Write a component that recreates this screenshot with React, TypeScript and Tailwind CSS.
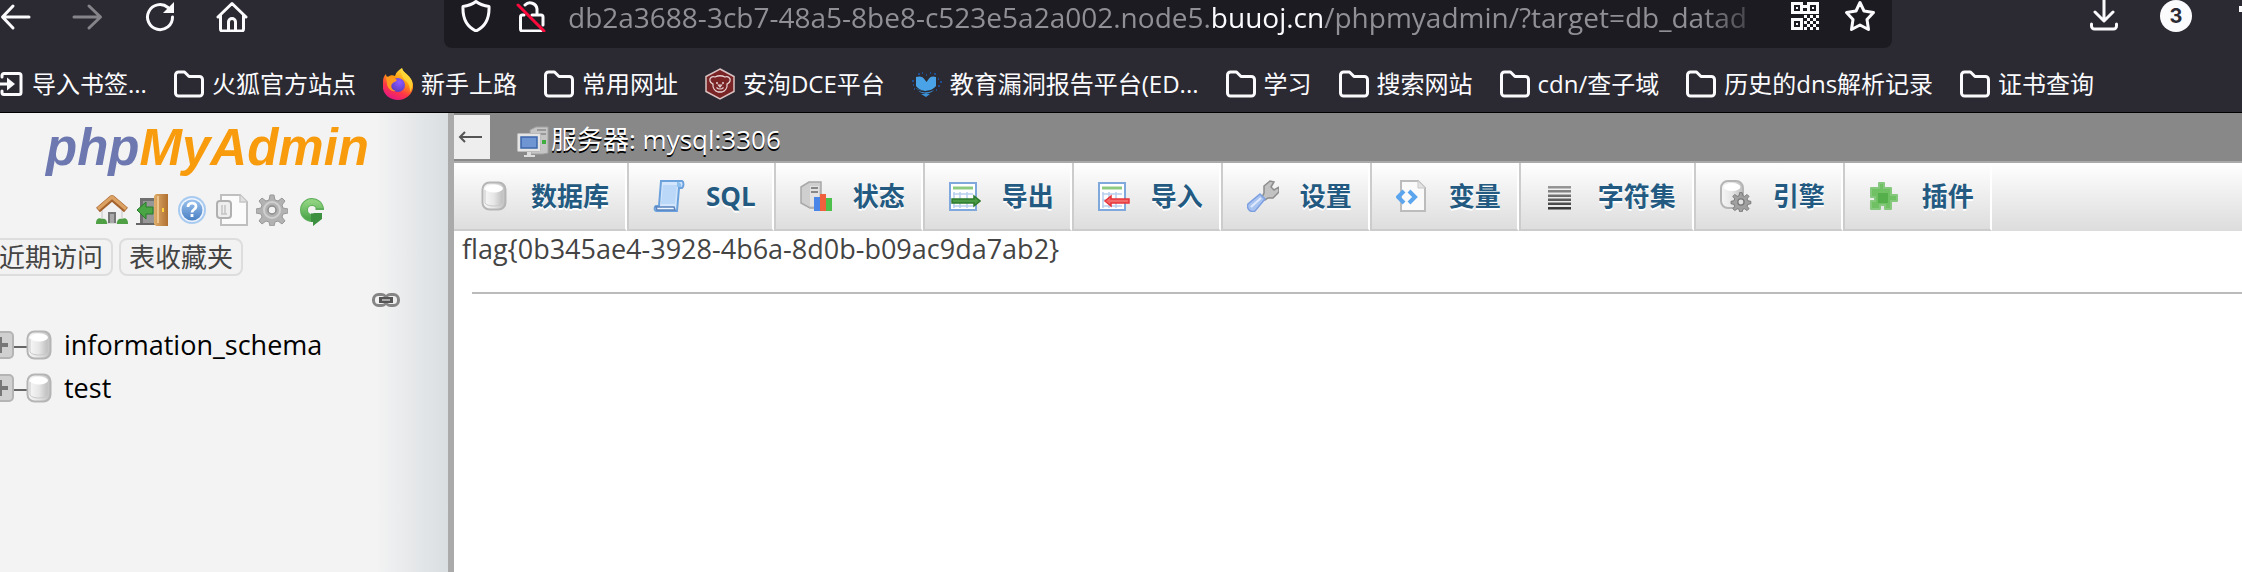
import type { ReactNode } from 'react';

type IconProps = { className?: string };

const Svg = ({ className = 'size-8', box = '0 0 32 32', children }: { className?: string; box?: string; children: ReactNode }) => (
  <svg className={`${className} shrink-0`} viewBox={box} fill="none" aria-hidden="true">
    {children}
  </svg>
);

/* ---------- browser icons ---------- */
const line = { stroke: '#fbfbfe', strokeWidth: 3, strokeLinecap: 'round', strokeLinejoin: 'round' } as const;

const BackIcon = () => (
  <Svg>
    <path d="M13 6 2.500 17 13 28M3 17h26" {...line} />
  </Svg>
);
const ForwardIcon = () => (
  <Svg>
    <path d="M17 6 28.500 17 17 28M28 17H2" {...line} stroke="#85848a" />
  </Svg>
);
const ReloadIcon = () => (
  <Svg>
    <path d="M28.500 17A12.500 12.500 0 1 1 24 7.500" {...line} />
    <path d="M30 2v11H19z" fill="#fbfbfe" />
  </Svg>
);
const HomeIcon = () => (
  <Svg>
    <path d="M2 17 16 3.500 30 17M4.500 15v14a2 2 0 0 0 2 2h19a2 2 0 0 0 2-2V15M12.500 31v-9a3.500 3.500 0 0 1 7 0v9" {...line} />
  </Svg>
);
const ShieldIcon = () => (
  <Svg>
    <path d="M16 1.500C12 4.500 7 6 3 6.500c-.5 11 3.500 20 13 24.500 9.500-4.500 13.500-13.500 13-24.500-4-.5-9-2-13-5z" {...line} />
  </Svg>
);
const LockIcon = () => (
  <Svg>
    <path d="M9 5a7 7 0 0 1 12 4v6M8 15h-1.500a2 2 0 0 0-2 2v12a2 2 0 0 0 2 2H25M16 15h9a2 2 0 0 1 2 2v8" {...line} />
    <path d="M2 5 28 31" stroke="#ff0a3c" strokeWidth="3" strokeLinecap="round" />
  </Svg>
);
const QrIcon = () => (
  <Svg className="size-[30px]" box="0 0 30 30">
    <path
      fillRule="evenodd"
      fill="#fbfbfe"
      d="M1 2h12v12H1zM4 5v6h6V5zM17 2h12v12H17zM20 5v6h6V5zM1 18h12v12H1zM4 21v6h6v-6zM13 5h4v3h-4zM13 11h4v3h-4zM6 7h2v2H6zM22 7h2v2h-2zM6 23h2v2H6zM14 15h3v3h-3zM17 18h3v3h-3zM20 15h3v3h-3zM26 15h3v3h-3zM23 18h3v3h-3zM14 21h3v3h-3zM20 21h3v3h-3zM26 21h3v3h-3zM17 24h3v3h-3zM23 24h3v3h-3zM14 27h3v3h-3zM20 27h3v3h-3zM26 27h3v3h-3z"
    />
  </Svg>
);
const StarIcon = () => (
  <Svg>
    <path d="m16 2.500 4 8.500 9.500 1.500-6.500 7 1.500 10L16 25l-8.500 4.500 1.500-10-6.500-7L12 11z" {...line} />
  </Svg>
);
const DownloadIcon = () => (
  <Svg>
    <path d="M16 0v20M7 12l9 9 9-9M3.500 24v2a3 3 0 0 0 3 3h19a3 3 0 0 0 3-3v-2" {...line} />
  </Svg>
);
const FolderIcon = () => (
  <Svg className="h-8 w-[30px]" box="0 0 30 32">
    <path d="M1.500 7a3 3 0 0 1 3-3h6l4.500 4.500h10.500a3 3 0 0 1 3 3V25a3 3 0 0 1-3 3h-21a3 3 0 0 1-3-3z" {...line} />
  </Svg>
);
const ImportIcon = () => (
  <Svg className="h-8 w-6" box="0 0 24 32">
    <path d="M2 9V7.500a2 2 0 0 1 2-2h15a2 2 0 0 1 2 2v17a2 2 0 0 1-2 2H4a2 2 0 0 1-2-2V23M0 16h10" {...line} />
    <path d="m7 9.500 8 6.500-8 6.500z" fill="#fbfbfe" />
  </Svg>
);
const FirefoxIcon = () => (
  <Svg className="h-8 w-[30px]" box="1 0 30 32">
    <defs>
      <linearGradient id="ffBody" x1="0.800" y1="0" x2="0.300" y2="1">
        <stop offset="0" stopColor="#fff44f" />
        <stop offset="0.400" stopColor="#ff980e" />
        <stop offset="0.700" stopColor="#ff3647" />
        <stop offset="1" stopColor="#e31587" />
      </linearGradient>
      <radialGradient id="ffGlobe" cx="0.600" cy="0.300" r="0.700">
        <stop offset="0" stopColor="#9059ff" />
        <stop offset="1" stopColor="#5b3fc4" />
      </radialGradient>
    </defs>
    <path d="M20 0c1 5 7 6 10 13 4 9-3 19-14 19S-1 23 1 14c0-4 1-6 3-8 0 2 1 3 2 3 2-2 5-2 7-1 1-4 4-6 7-8z" fill="url(#ffBody)" />
    <circle cx="16" cy="17" r="7" fill="url(#ffGlobe)" />
    <path d="M4 9c3-1 8 0 11 3-1 2-4 2-5 4-2 3 0 6 4 7-5 1-9-3-9-8z" fill="#ff9a1f" />
    <path d="M20 0c1 5 7 6 10 13 1 4 0 8-2 11 0-5-1-8-4-11-3-2-6-7-4-13z" fill="#ffd83a" opacity="0.800" />
  </Svg>
);
const DceIcon = () => (
  <Svg className="h-8 w-[30px]" box="1 0 30 32">
    <path d="m16 1 14 7.500v15L16 31 2 23.500v-15z" fill="#7b2426" stroke="#d9c3c3" strokeWidth="1.500" />
    <path d="M11 9c3-1.500 7-1.500 10 0 3-1 6 1 5 4-.5 2-2 2.500-3 3 .5 4-2 7-5 8h-4c-3-1-5.500-4-5-8-1-.5-2.500-1-3-3-1-3 2-5 5-4z" stroke="#e6d3d3" strokeWidth="1.300" />
    <path d="M12 15h2M18 15h2" stroke="#e6d3d3" strokeWidth="1.500" />
    <path d="M14.500 17h3L16 19zM12.500 19.500c2 2 5 2 7 0" stroke="#e6d3d3" strokeWidth="1.200" />
  </Svg>
);
const BirdIcon = () => (
  <Svg className="h-8 w-[30px]" box="1 0 30 32">
    <path d="M5 9c3-1 7-1 9 3l1.500 2L17 12c2-4 5-4 8-3v9c-2 3-6 5-9.500 5S7 21 5 18z" fill="#4aa3e6" />
    <path d="M5 20c6 4 13 4 19 0-1 3-4 5-9 6-4-1-8-2-10-6z" fill="#3c92d8" />
    <path d="M3 20c7 5 16 5 23-1" stroke="#2b2a33" strokeWidth="1.500" />
    <path d="M10 26h9l-4 3z" fill="#3c92d8" />
    <path d="M7 6h2M11 5h1M15 7h1M19 5h1M23 6h2M1 13h2M2 17h1M3 21h1M27 11h1M27 18h2M25 22h1M29 14h2" stroke="#1d4f92" strokeWidth="2" />
  </Svg>
);

/* ---------- phpMyAdmin icons ---------- */
const Gradients = () => (
  <svg className="absolute size-0" aria-hidden="true">
    <defs>
      <linearGradient id="silver" x1="0" x2="1">
        <stop offset="0" stopColor="#f6f6f6" />
        <stop offset="0.500" stopColor="#e6e6e6" />
        <stop offset="1" stopColor="#bdbdbd" />
      </linearGradient>
      <linearGradient id="green" x1="0" y1="0" x2="0" y2="1">
        <stop offset="0" stopColor="#8ed27f" />
        <stop offset="1" stopColor="#4fa84c" />
      </linearGradient>
      <linearGradient id="blue" x1="0" y1="0" x2="0" y2="1">
        <stop offset="0" stopColor="#9cc3ee" />
        <stop offset="1" stopColor="#4a80c4" />
      </linearGradient>
      <linearGradient id="wood" x1="0" x2="1">
        <stop offset="0" stopColor="#e0ae6c" />
        <stop offset="1" stopColor="#b07030" />
      </linearGradient>
      <linearGradient id="bars" x1="0" y1="0" x2="0" y2="1">
        <stop offset="0" stopColor="#999" />
        <stop offset="1" stopColor="#333" />
      </linearGradient>
    </defs>
  </svg>
);

const gear =
  'M14 1h4l1 5 3 1 4-3 3 3-3 4 1 3 5 1v4l-5 1-1 3 3 4-3 3-4-3-3 1-1 4h-4l-1-4-3-1-4 3-3-3 3-4-1-3-5-1v-4l5-1 1-3-3-4 3-3 4 3 3-1z';

const HouseIcon = () => (
  <Svg>
    <path d="M6 15 16 7l10 8v14H6z" fill="#f1f1f1" stroke="#c4c4c4" />
    <path d="M12 18h8v11h-8z" fill="#777" />
    <path d="M14 20h4v9h-4z" fill="#a8a8a8" />
    <path d="m2 16 14-12 14 12" stroke="#a4622c" strokeWidth="6" strokeLinejoin="round" />
    <path d="m2 15 14-12 14 12" stroke="#dba263" strokeWidth="3.500" strokeLinejoin="round" />
    <path d="M0 29c0-4 3-6 6-4 3-1 5 1 5 4v1H0zM21 29c0-3 2-5 5-4 3-2 6 0 6 4v1H21z" fill="#4f9f44" />
  </Svg>
);
const ExitIcon = () => (
  <Svg>
    <path d="M4 4h16v25H4z" fill="#707070" />
    <path d="M7 7h11v22H7z" fill="#979797" />
    <path d="M0 30h22" stroke="#666" strokeWidth="2" />
    <path d="m18 2 2-2h12v32H20l-2-2z" fill="url(#wood)" />
    <path d="M21 2h2v27h-2z" fill="#edc48b" />
    <path d="M26 14h2v4h-2z" fill="#ffd23c" />
    <path d="m1 16 9-8v5h7v7h-7v5z" fill="#4aa545" stroke="#277c2a" />
  </Svg>
);
const HelpIcon = () => (
  <Svg>
    <circle cx="16" cy="16" r="14" fill="#a9caf0" />
    <circle cx="16" cy="16" r="12" fill="#eef5fc" />
    <circle cx="16" cy="16" r="10.500" fill="url(#blue)" />
    <path d="M12 13c0-5 8-5 8-.5 0 3-4 3-4 6M16 20v3" stroke="#fff" strokeWidth="2.800" />
  </Svg>
);
const DocsIcon = () => (
  <Svg>
    <path d="M5 1h19l7 7v23H5z" fill="#fbfbfb" stroke="#bfbfbf" strokeWidth="2" />
    <path d="M24 1v7h7" fill="#e0e0e0" stroke="#c6c6c6" strokeWidth="1.500" />
    <rect x="1" y="7" width="14" height="17" rx="3" fill="#eee" stroke="#b0b0b0" strokeWidth="2" />
    <path d="M6 11v9M9 11v9M5 20h6" stroke="#c4c4c4" strokeWidth="1.500" />
  </Svg>
);
const GearIcon = () => (
  <Svg>
    <path d={gear} fill="#b2b2b2" stroke="#999" />
    <circle cx="16" cy="16" r="8" stroke="#d0d0d0" strokeWidth="2" />
    <circle cx="16" cy="16" r="4" fill="#f3f3f3" stroke="#8c8c8c" strokeWidth="1.500" />
  </Svg>
);
const RefreshIcon = () => (
  <Svg>
    <path d="M24 15.500A8 8 0 1 0 16 24" stroke="#5fae5c" strokeWidth="8" />
    <path d="M24 15.500A8 8 0 1 0 16 24" stroke="url(#green)" strokeWidth="6" />
    <path d="m17 16 3-2h8v2z" fill="#5fae5c" />
    <path d="M15 19h11v6l-9 7v-4h-2z" fill="#3c9040" />
    <circle cx="16" cy="16" r="3.500" fill="#f3f3f3" />
  </Svg>
);
const ChainIcon = () => (
  <Svg className="h-4 w-7" box="0 0 28 16">
    <rect x="1.500" y="2.500" width="13" height="11" rx="5" stroke="#858585" strokeWidth="3" />
    <rect x="13.500" y="2.500" width="13" height="11" rx="5" stroke="#858585" strokeWidth="3" />
    <path d="M7 8h14" stroke="#555" strokeWidth="6" />
    <path d="M10 8h8" stroke="#aaa" strokeWidth="2" />
  </Svg>
);
const DatabaseIcon = ({ className = 'size-8' }: IconProps) => (
  <Svg className={className}>
    <rect x="4.500" y="2.500" width="23" height="27" rx="7" fill="url(#silver)" stroke="#b5b5b5" strokeWidth="2" />
    <path d="M7 10v13c2 4 16 4 18 0V10" fill="url(#silver)" stroke="#c9c9c9" />
    <ellipse cx="16" cy="8.500" rx="9" ry="4" fill="#fff" />
  </Svg>
);
const ServerIcon = () => (
  <Svg className="mt-1 size-8">
    <path d="m13 4 6-3h12v26l-5 1H14z" fill="#c5c5c5" stroke="#a2a2a2" />
    <path d="M20 4h9M20 8h9" stroke="#8b8b8b" strokeWidth="1.500" />
    <path d="M25 14h4v4h-4z" fill="#3fae3f" />
    <rect x="0.500" y="7.500" width="23" height="18" rx="1" fill="#e4e4e4" stroke="#bbb" />
    <rect x="4" y="11" width="16" height="11" fill="#6f96d2" stroke="#3b66aa" strokeWidth="1.500" />
    <path d="M10 26h4v3h4v2H7v-2h3z" fill="#dcdcdc" />
  </Svg>
);
const SqlIcon = () => (
  <Svg>
    <path d="M8 1h21c2 1 2 5 0 7h-3l-2 23H4C1 31 1 27 3 26h3z" fill="#d3e6fb" stroke="#6ba1dc" strokeWidth="2" />
    <path d="M10 5h14l-2 19H8z" fill="#bcd8f8" />
    <path d="M3 27h18l1 3H4z" fill="#f2f8ff" stroke="#5b82bf" strokeWidth="1.500" />
    <path d="M24 2c3 0 5 2 4 5h-4z" fill="#8fc0ee" />
  </Svg>
);
const StatusIcon = () => (
  <Svg>
    <path d="m1 7 8-5h12v26h-11l-9-5z" fill="#cfcfcf" stroke="#a8a8a8" strokeWidth="1.500" />
    <path d="M10 6h9v20h-9z" fill="#e2e2e2" />
    <path d="M11 8h7M11 12h7" stroke="#888" strokeWidth="2" />
    <path d="M14 17h6v14h-6z" fill="#4a86e8" />
    <path d="M20 14h6v17h-6z" fill="#f0603c" />
    <path d="M26 18h6v13h-6z" fill="#4cc04a" />
  </Svg>
);
const SheetBase = () => (
  <>
    <rect x="1" y="3" width="26" height="27" fill="#fff" stroke="#7fa8dc" strokeWidth="2" />
    <path d="M4 8h20" stroke="#8ecb80" strokeWidth="3" />
    <path d="M4 14h20M4 20h20M4 26h20M5 12v16M11 12v16M18 12v16" stroke="#b8d0ee" strokeWidth="1.500" />
  </>
);
const ExportIcon = () => (
  <Svg>
    <SheetBase />
    <path d="M3 19h22v-3l6 5-6 5v-3H3z" fill="#4b9a45" stroke="#2d7a2c" strokeWidth="1.500" />
  </Svg>
);
const ImportDataIcon = () => (
  <Svg>
    <SheetBase />
    <path d="M31 19H13v-3l-6 5 6 5v-3h18z" fill="#f26a6a" stroke="#e8343b" strokeWidth="1.500" />
  </Svg>
);
const WrenchIcon = () => (
  <Svg>
    <path d="M17 13V6l6-5 4 1-3 5 3 3 5-3v5l-6 6h-5l-3 2-3-3z" fill="#c2c2c2" stroke="#8c8c8c" strokeWidth="1.500" />
    <path d="m13 14 5 5-10 12c-4 2-9-2-7-7z" fill="#a9c3f1" stroke="#7c9fe0" strokeWidth="1.500" />
    <path d="M4 27 14 18" stroke="#dfe9fb" strokeWidth="2" />
  </Svg>
);
const VariablesIcon = () => (
  <Svg>
    <path d="M5 1h17l7 7v23H5z" fill="#fafafa" stroke="#bcbcbc" strokeWidth="2" />
    <path d="M22 1v7h7" fill="#e4e4e4" stroke="#c9c9c9" />
    <path d="m8 11-6 6 6 6M13 11l6 6-6 6" stroke="#5ba5ee" strokeWidth="4" />
  </Svg>
);
const CharsetIcon = () => (
  <Svg>
    <path d="M3 6h23v2.500H3zM3 10h23v2.500H3zM3 14.500h23V17H3zM3 18.500h23V21H3zM3 22.500h23V25H3zM3 27h23v2.500H3z" fill="url(#bars)" />
  </Svg>
);
const EngineIcon = () => (
  <Svg>
    <rect x="1" y="1" width="22" height="27" rx="7" fill="url(#silver)" stroke="#b5b5b5" strokeWidth="2" />
    <ellipse cx="12" cy="7" rx="8.500" ry="4" fill="#fff" />
    <g transform="translate(11 12) scale(0.620)">
      <path d={gear} fill="#a0a0a0" stroke="#777" strokeWidth="1.500" />
      <circle cx="16" cy="16" r="5" fill="#e2e2e2" stroke="#777" strokeWidth="2" />
    </g>
  </Svg>
);
const PluginIcon = () => (
  <Svg>
    <path d="M2 8h8V3h5v5h7v7h6v6h-6v8h-6v-4h-5v4H2v-8h4v-4H2z" fill="#6fc163" stroke="#86c97e" strokeWidth="2" strokeLinejoin="round" />
    <path d="M9 13h10v10H9z" fill="#55b04b" />
  </Svg>
);

/* ---------- data ---------- */
const bookmarks: { label: string; icon: ReactNode }[] = [
  { label: '导入书签...', icon: <ImportIcon /> },
  { label: '火狐官方站点', icon: <FolderIcon /> },
  { label: '新手上路', icon: <FirefoxIcon /> },
  { label: '常用网址', icon: <FolderIcon /> },
  { label: '安洵DCE平台', icon: <DceIcon /> },
  { label: '教育漏洞报告平台(ED...', icon: <BirdIcon /> },
  { label: '学习', icon: <FolderIcon /> },
  { label: '搜索网站', icon: <FolderIcon /> },
  { label: 'cdn/查子域', icon: <FolderIcon /> },
  { label: '历史的dns解析记录', icon: <FolderIcon /> },
  { label: '证书查询', icon: <FolderIcon /> },
];

const tabs: { label: string; icon: ReactNode }[] = [
  { label: '数据库', icon: <DatabaseIcon /> },
  { label: 'SQL', icon: <SqlIcon /> },
  { label: '状态', icon: <StatusIcon /> },
  { label: '导出', icon: <ExportIcon /> },
  { label: '导入', icon: <ImportDataIcon /> },
  { label: '设置', icon: <WrenchIcon /> },
  { label: '变量', icon: <VariablesIcon /> },
  { label: '字符集', icon: <CharsetIcon /> },
  { label: '引擎', icon: <EngineIcon /> },
  { label: '插件', icon: <PluginIcon /> },
];

const shortcuts: { label: string; icon: ReactNode }[] = [
  { label: '主页', icon: <HouseIcon /> },
  { label: '退出', icon: <ExitIcon /> },
  { label: '帮助', icon: <HelpIcon /> },
  { label: '文档', icon: <DocsIcon /> },
  { label: '面板设置', icon: <GearIcon /> },
  { label: '刷新', icon: <RefreshIcon /> },
];

const databases = ['information_schema', 'test'];

/* ---------- layout ---------- */
function BrowserChrome() {
  return (
    <header className="border-b border-black bg-[#2b2a33] text-[#fbfbfe]">
      <div className="flex h-12 items-start">
        <nav className="flex w-[444px] shrink-0 gap-10">
          <button aria-label="后退"><BackIcon /></button>
          <button aria-label="前进"><ForwardIcon /></button>
          <button aria-label="重新载入"><ReloadIcon /></button>
          <button aria-label="主页"><HomeIcon /></button>
        </nav>
        <div className="flex h-12 min-w-0 grow items-start rounded-b-lg bg-[#1c1b22] pr-4 pl-4">
          <ShieldIcon />
          <span className="ml-6"><LockIcon /></span>
          <p className="ml-5 min-w-0 grow overflow-x-clip mask-r-from-94% pb-2 text-[28px] leading-[34px] whitespace-nowrap text-[#8f8f95]">
            db2a3688-3cb7-48a5-8be8-c523e5a2a002.node5.<span className="text-[#fbfbfe]">buuoj.cn</span>/phpmyadmin/?target=db_datad
          </p>
          <button aria-label="二维码" className="ml-4"><QrIcon /></button>
          <button aria-label="收藏" className="ml-6"><StarIcon /></button>
        </div>
        <div className="flex w-[350px] shrink-0 items-start justify-end gap-10">
          <button aria-label="下载"><DownloadIcon /></button>
          <button className="size-8 rounded-full bg-[#fbfbfe] font-[Inter] text-xl leading-8 font-bold text-[#2b2a33]">3</button>
          <span className="mt-[6px] ml-[7px] h-[6px] w-[3px] bg-[#fbfbfe]" />
        </div>
      </div>
      <nav className="flex h-16 gap-[27px] overflow-hidden pt-5 text-2xl leading-8 whitespace-nowrap">
        {bookmarks.map((b) => (
          <a key={b.label} href="#" className="flex h-8 gap-2">
            {b.icon}
            <span>{b.label}</span>
          </a>
        ))}
      </nav>
    </header>
  );
}

function Sidebar() {
  return (
    <aside className="w-[454px] shrink-0 border-r-[6px] border-[#aaa] bg-linear-to-r from-[#f3f3f3] from-84% to-[#d9dee1]">
      <a href="#" className="block h-[65px] pl-[46px] font-['Liberation_Sans'] text-[51px] leading-[70px] font-bold text-[#6c78af] italic">
        php<span className="text-[#f89c0e]">MyAdmin</span>
      </a>
      <nav className="mt-4 flex gap-2 pl-24">
        {shortcuts.map((s) => (
          <a key={s.label} href="#" aria-label={s.label}>{s.icon}</a>
        ))}
      </nav>
      <div className="mt-3 -ml-[11px] flex gap-[6px] text-[26px] leading-[34px] text-[#444]">
        <button className="rounded-lg border-2 border-[#ddd] bg-[#f2f2f2] px-2">近期访问</button>
        <button className="rounded-lg border-2 border-[#ddd] bg-[#f2f2f2] px-2">表收藏夹</button>
      </div>
      <div className="mt-4 flex justify-end pr-12"><ChainIcon /></div>
      <ul className="mt-[15px] text-[27px] leading-[42px] text-black">
        {databases.map((name) => (
          <li key={name} className="flex h-[43px] items-center">
            <button aria-label={`展开 ${name}`} className="-ml-[14px]">
              <Svg className="size-7" box="0 0 28 28">
                <rect x="1" y="1" width="26" height="26" rx="4" fill="#d0d0d0" stroke="#b4b4b4" strokeWidth="2" />
                <path d="M6 14h16M14 6v16" stroke="#777" strokeWidth="4" />
              </Svg>
            </button>
            <span className="mt-1 h-[2px] w-[13px] bg-[#666]" />
            <DatabaseIcon className="-mx-1 size-8" />
            <a href="#" className="ml-[13px]">{name}</a>
          </li>
        ))}
      </ul>
    </aside>
  );
}

function Main() {
  return (
    <main className="min-w-0 grow bg-white">
      <div className="flex h-[50px] items-start border-b-2 border-[#aaa] bg-[#888] pt-[2px]">
        <button className="h-11 w-9 bg-[#eee] text-[#555]" aria-label="隐藏面板">
          <svg className="ml-1 h-4 w-6" viewBox="0 0 24 16" fill="none" stroke="currentColor" strokeWidth="2" aria-hidden="true">
            <path d="M24 8H2M7 3 2 8l5 5" />
          </svg>
        </button>
        <div className="flex gap-[2px] pt-[7px] pl-[27px] text-[26px] leading-[34px] text-white text-shadow-[0_2px_0_#000]">
          <ServerIcon />
          <a href="#">服务器: mysql:3306</a>
        </div>
      </div>
      <nav className="flex bg-linear-to-b from-white to-[#dcdcdc] text-[26px] leading-[34px] font-bold whitespace-nowrap text-[#235a81] text-shadow-[0_2px_0_#fff]">
        {tabs.map((t) => (
          <a
            key={t.label}
            href="#"
            className="flex h-[68px] items-center gap-[21px] border-r-2 border-b-2 border-r-white border-b-[#ccc] pr-4 pl-6 not-first:border-l-2 not-first:border-l-[#ccc]"
          >
            {t.icon}
            <span>{t.label}</span>
          </a>
        ))}
      </nav>
      <p className="pt-px pl-2 text-[27px] leading-[34px] text-[#444]">flag{'{'}0b345ae4-3928-4b6a-8d0b-b09ac9da7ab2{'}'}</p>
      <hr className="mt-[26px] ml-[18px] border-t-2 border-[#bbb]" />
    </main>
  );
}

export default function App() {
  return (
    <div className="flex min-h-screen flex-col font-['Open_Sans','Noto_Sans_CJK_SC',sans-serif]">
      <Gradients />
      <BrowserChrome />
      <div className="flex grow">
        <Sidebar />
        <Main />
      </div>
    </div>
  );
}
